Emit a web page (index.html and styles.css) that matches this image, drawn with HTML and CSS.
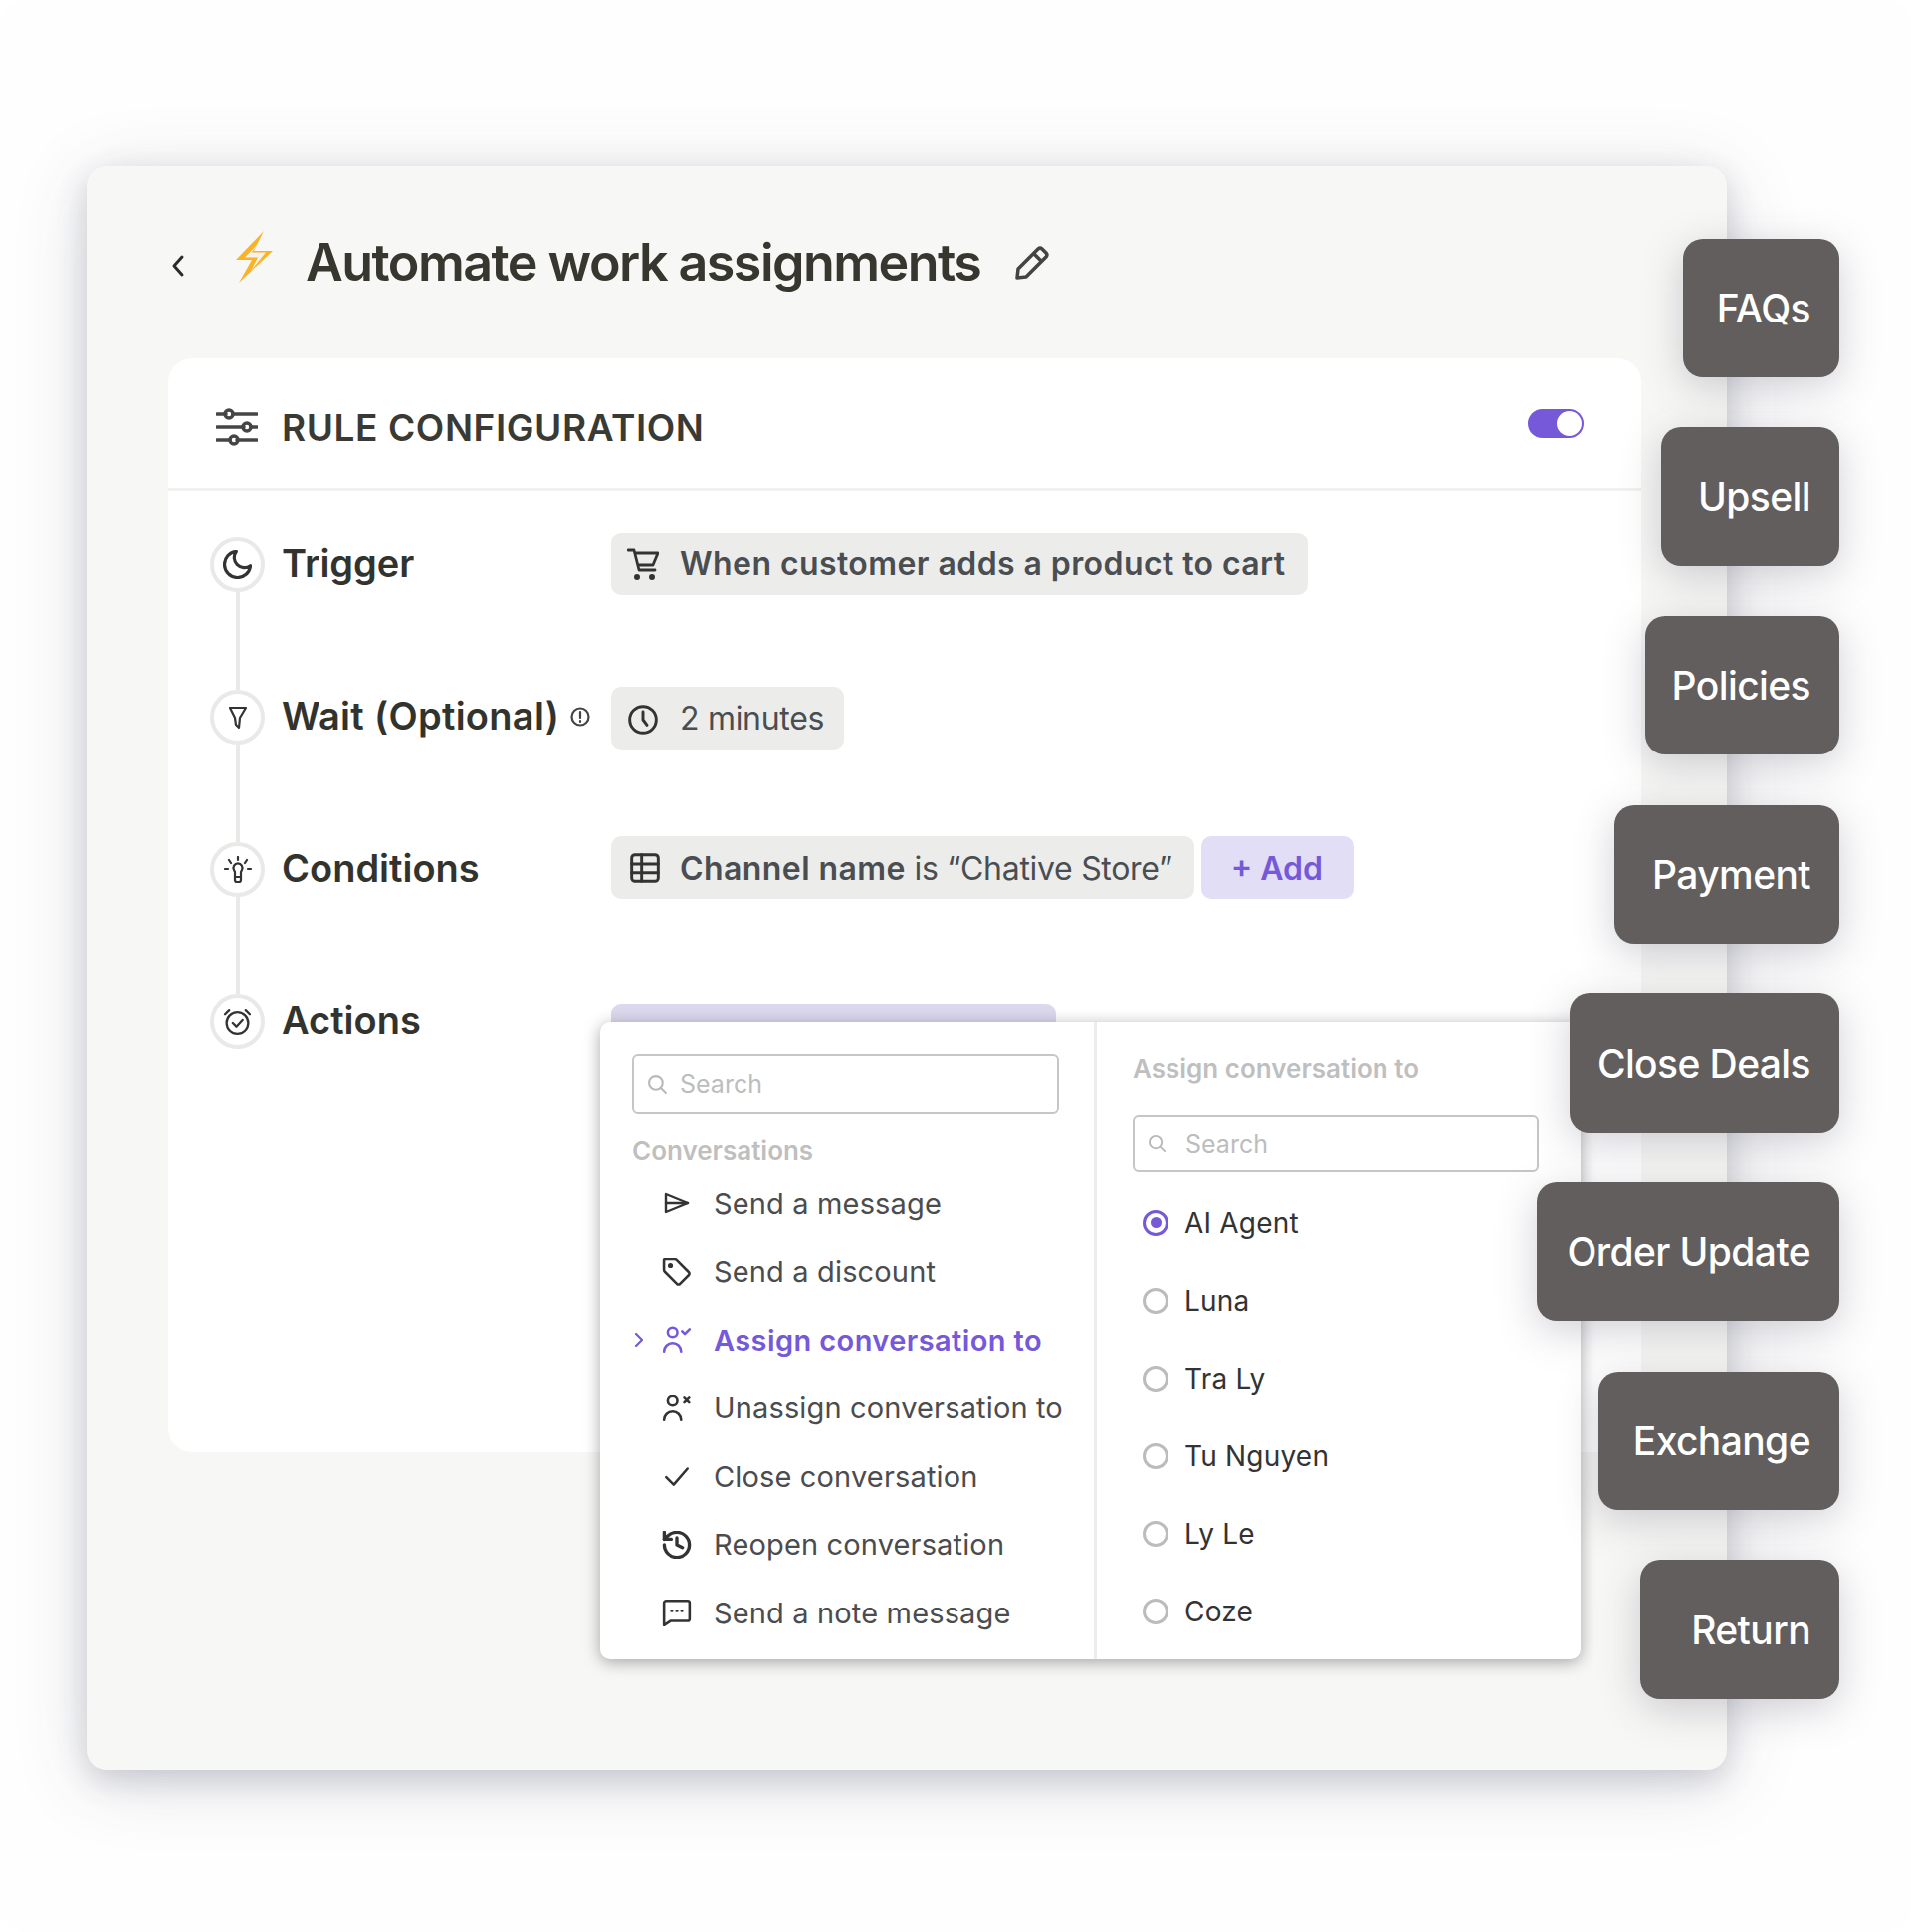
FILE: index.html
```html
<!DOCTYPE html>
<html lang="en">
  <head>
    <meta charset="UTF-8" />
    <meta name="viewport" content="width=device-width, initial-scale=1.0" />
    <title>Automate work assignments</title>
    <link rel="stylesheet" href="styles.css">
  </head>
  <body>
    <div class="frame">
      <div class="panel">
        <div class="page-head">
          <svg class="back-icon" viewBox="0 0 14 24"><path d="M11 3 3 12l8 9" /></svg>
          <svg class="bolt-icon" viewBox="0 0 37 52"><path d="M28 0 0 29h16L3 52l34-32H18z" /><path d="M24 11 9 26.500h13L15 40l15-18.500H15.500z" class="bolt-inner" /></svg>
          <h1>Automate work assignments</h1>
          <svg class="pencil-icon" viewBox="0 0 34 34"><path d="M2 32l1-9L23 3a3 3 0 0 1 4 0l4 4a3 3 0 0 1 0 4L11 31z" /><path d="M19 8l7 7" /></svg>
        </div>

        <div class="card">
          <div class="card-head">
            <svg class="sliders-icon" viewBox="0 0 42 38">
              <path d="M1 6h9M17 6h24M1 19h27M35 19h6M1 32h13M21 32h20" />
              <circle cx="13" cy="6" r="4" /><circle cx="31" cy="19" r="4" /><circle cx="18" cy="32" r="4" />
            </svg>
            <h2>RULE CONFIGURATION</h2>
            <span class="toggle"><span class="toggle-knob"></span></span>
          </div>

          <div class="steps">
            <div class="step">
              <div class="rail">
                <span class="node"><svg class="line-icon node-moon" viewBox="2 2 20 20"><path d="M21 12.8A9 9 0 1 1 11.2 3a7 7 0 0 0 9.8 9.8z" /></svg></span>
                <span class="rail-line"></span>
              </div>
              <div class="step-label">Trigger</div>
              <div class="step-chips chips-trigger">
                <span class="chip strong">
                  <svg class="line-icon chip-icon cart-icon" viewBox="0 0 32 32"><path d="M1 2h6l5 20h16" /><path d="M9 5h22l-5 12H12" /><circle cx="10" cy="29" r="1.600" class="dot" /><circle cx="25" cy="29" r="1.600" class="dot" /></svg>
                  When customer adds a product to cart
                </span>
              </div>
            </div>

            <div class="step">
              <div class="rail">
                <span class="node"><svg class="line-icon node-filter" viewBox="0 0 20 24"><path d="M2 2h16l-6 10-1 10-3-3-1-7z" /></svg></span>
                <span class="rail-line"></span>
              </div>
              <div class="step-label label-wait">Wait (Optional)<svg class="line-icon info-icon" viewBox="0 0 20 20"><circle cx="10" cy="10" r="8.500" /><path d="M10 5v6M10 14v1" /></svg></div>
              <div class="step-chips chips-wait">
                <span class="chip wait-chip">
                  <svg class="line-icon chip-icon clock-icon" viewBox="0 0 24 24"><circle cx="12" cy="12" r="10" /><path d="M12 6v6l3 4" /></svg>
                  2 minutes
                </span>
              </div>
            </div>

            <div class="step">
              <div class="rail">
                <span class="node"><svg class="line-icon node-bulb" viewBox="0 0 28 28"><path d="M10 14a4.500 4.500 0 1 1 8 0l-1 2v8a2 2 0 0 1-2 2h-2a2 2 0 0 1-2-2v-8z" /><path d="M14 1v3M5 4l2 3M23 4l-2 3M1 13h3M24 13h3M11 21h6" /></svg></span>
                <span class="rail-line"></span>
              </div>
              <div class="step-label">Conditions</div>
              <div class="step-chips chips-conditions">
                <span class="chip">
                  <svg class="line-icon chip-icon" viewBox="0 0 24 24"><rect x="2" y="2" width="20" height="20" rx="2.500" /><path d="M2 9h20M2 15.500h20M9.500 2v20" /></svg>
                  <span class="chip-text"><b>Channel name</b> is “Chative Store”</span>
                </span>
                <span class="chip add-chip"><span class="chip-text">+ Add</span></span>
              </div>
            </div>

            <div class="step">
              <div class="rail">
                <span class="node"><svg class="line-icon node-alarm" viewBox="0 0 28 28"><circle cx="14" cy="15.500" r="10.500" /><path d="M9.500 15.500l3.500 3.500 6-6.500M2 7l4-4M26 7l-4-4" /></svg></span>
              </div>
              <div class="step-label">Actions</div>
              <div class="step-chips chips-actions">
                <span class="chip action-chip"></span>
              </div>
            </div>
          </div>
        </div>
      </div>

      <div class="dropdown">
        <div class="menu-col">
          <div class="search search-main">
            <svg class="search-icon" viewBox="0 0 20 20"><circle cx="8.500" cy="8.500" r="6.500" /><path d="M13.500 13.500 18 18" /></svg>
            Search
          </div>
          <div class="col-title menu-title">Conversations</div>
          <div class="menu-item">
            <span class="caret"></span>
            <svg class="line-icon menu-icon" viewBox="-2 -3 30 28"><path d="M2 2l22 9-22 9z" /><path d="M2 11h22" /></svg>
            Send a message
          </div>
          <div class="menu-item">
            <span class="caret"></span>
            <svg class="line-icon menu-icon" viewBox="1 1 26 26"><path d="M2 3a1 1 0 0 1 1-1h9a3 3 0 0 1 2 1l11 11a2 2 0 0 1 0 3l-8 8a2 2 0 0 1-3 0L3 14a3 3 0 0 1-1-2z" /><circle cx="8" cy="8" r="1.200" class="dot" /></svg>
            Send a discount
          </div>
          <div class="menu-item active">
            <span class="caret"><svg class="line-icon" viewBox="0 0 8 14"><path d="M1 1l6 6-6 6" /></svg></span>
            <svg class="line-icon menu-icon" viewBox="0 0 28 26"><circle cx="10" cy="6" r="4.500" /><path d="M2 24a8 8 0 0 1 16 0" /><path d="M19 5l2.500 2.500L26 3" /></svg>
            Assign conversation to
          </div>
          <div class="menu-item">
            <span class="caret"></span>
            <svg class="line-icon menu-icon" viewBox="0 0 28 26"><circle cx="10" cy="6" r="4.500" /><path d="M2 24a8 8 0 0 1 16 0" /><path d="M21 3l4.500 4.500M25.500 3 21 7.500" /></svg>
            Unassign conversation to
          </div>
          <div class="menu-item">
            <span class="caret"></span>
            <svg class="line-icon menu-icon" viewBox="0 0 28 22"><path d="M4 12l7 7L24 4" /></svg>
            Close conversation
          </div>
          <div class="menu-item">
            <span class="caret"></span>
            <svg class="line-icon menu-icon" viewBox="2 2 20 20"><path d="M3 12a9 9 0 1 0 9-9 9.750 9.750 0 0 0-6.740 2.740L3 8" /><path d="M3 3v5h5M12 7v5l4 2" /></svg>
            Reopen conversation
          </div>
          <div class="menu-item">
            <span class="caret"></span>
            <svg class="line-icon menu-icon" viewBox="0 0 28 26"><path d="M2 4a2 2 0 0 1 2-2h20a2 2 0 0 1 2 2v15a2 2 0 0 1-2 2H8l-6 4z" /><path d="M9 11.500h.5M13.800 11.500h.5M18.500 11.500h.5" /></svg>
            Send a note message
          </div>
        </div>

        <div class="assign-col">
          <div class="col-title assign-title">Assign conversation to</div>
          <div class="search search-side">
            <svg class="search-icon" viewBox="0 0 20 20"><circle cx="8.500" cy="8.500" r="6.500" /><path d="M13.500 13.500 18 18" /></svg>
            Search
          </div>
          <div class="radio-list">
            <div class="radio-item"><span class="radio selected"></span>AI Agent</div>
            <div class="radio-item"><span class="radio"></span>Luna</div>
            <div class="radio-item"><span class="radio"></span>Tra Ly</div>
            <div class="radio-item"><span class="radio"></span>Tu Nguyen</div>
            <div class="radio-item"><span class="radio"></span>Ly Le</div>
            <div class="radio-item"><span class="radio"></span>Coze</div>
          </div>
        </div>
      </div>

      <div class="tabs">
        <div class="tab tab-faqs">FAQs</div>
        <div class="tab tab-upsell">Upsell</div>
        <div class="tab tab-policies">Policies</div>
        <div class="tab tab-payment">Payment</div>
        <div class="tab tab-close">Close Deals</div>
        <div class="tab tab-order">Order Update</div>
        <div class="tab tab-exchange">Exchange</div>
        <div class="tab tab-return">Return</div>
      </div>
    </div>
  </body>
</html>
```

FILE: styles.css
```css
* {
  margin: 0;
  padding: 0;
  box-sizing: border-box;
  font-family: "Inter", "Liberation Sans", sans-serif;
}
body {
  background: #ffffff;
}
.frame {
  position: relative;
  width: 1920px;
  height: 1941px;
  padding: 167px 0 0 87px;
  background: #fefefe;
  border-radius: 24px;
  overflow: hidden;
}

/* main panel */
.panel {
  width: 1648px;
  height: 1611px;
  padding-left: 82px;
  background: #f7f7f5;
  border-radius: 20px;
  box-shadow: 0 10px 30px rgba(60, 65, 90, 0.2), 0 12px 75px rgba(60, 65, 90, 0.16);
}
.page-head {
  display: flex;
  align-items: center;
  height: 193px;
}
.back-icon {
  width: 14px;
  height: 24px;
  margin: 6px 0 0 3px;
  fill: none;
  stroke: #2b2b2b;
  stroke-width: 3;
  stroke-linecap: round;
  stroke-linejoin: round;
}
.bolt-icon {
  flex: none;
  width: 37px;
  height: 52px;
  margin: -11px 0 0 51px;
  fill: #fbb324;
}
.bolt-inner {
  fill: #f4f2ea;
}
h1 {
  margin-left: 33px;
  font-size: 52px;
  font-weight: 600;
  letter-spacing: -1.55px;
  line-height: 64px;
  color: #37372f;
}
.pencil-icon {
  width: 34px;
  height: 34px;
  margin-left: 35px;
  fill: none;
  stroke: #444444;
  stroke-width: 3.5;
  stroke-linejoin: round;
}

/* card */
.card {
  width: 1480px;
  height: 1099px;
  background: #ffffff;
  border-radius: 24px;
}
.card-head {
  display: flex;
  align-items: center;
  height: 133px;
  padding: 9px 58px 0 48px;
  border-bottom: 3px solid #f1f1f0;
}
.sliders-icon {
  width: 42px;
  height: 38px;
  margin-top: -2px;
  fill: none;
  stroke: #454545;
  stroke-width: 3.5;
  stroke-linecap: round;
}
h2 {
  flex: 1;
  margin-left: 24px;
  font-size: 37px;
  font-weight: 600;
  letter-spacing: 0.6px;
  color: #3a3a35;
}
.toggle {
  position: relative;
  width: 56px;
  height: 29px;
  margin-top: -9px;
  background: #7559d9;
  border-radius: 15px;
}
.toggle-knob {
  position: absolute;
  top: 2px;
  right: 2px;
  width: 25px;
  height: 25px;
  background: #ffffff;
  border-radius: 50%;
}

/* steps */
.steps {
  padding: 47px 0 0 42px;
}
.step {
  display: grid;
  grid-template-columns: 55px 313px 1fr;
  column-gap: 17px;
  height: 153px;
}
.rail {
  display: flex;
  flex-direction: column;
  align-items: center;
}
.node {
  display: flex;
  flex: none;
  align-items: center;
  justify-content: center;
  width: 55px;
  height: 55px;
  border: 4px solid #e9e9e8;
  border-radius: 50%;
  background: #ffffff;
}
.rail-line {
  flex: 1;
  width: 4px;
  background: #e9e9e8;
}
.step-label {
  display: flex;
  align-items: center;
  height: 54px;
  padding-bottom: 2px;
  font-size: 38px;
  font-weight: 600;
  white-space: nowrap;
  color: #33332e;
}
.label-wait {
  letter-spacing: 0.3px;
}
.line-icon {
  fill: none;
  stroke: currentColor;
  stroke-width: 2.2;
  stroke-linecap: round;
  stroke-linejoin: round;
}
.dot {
  fill: currentColor;
}
.node-moon {
  width: 29px;
  height: 29px;
  color: #333333;
}
.node-filter {
  width: 20px;
  height: 24px;
  color: #333333;
}
.node-bulb {
  width: 28px;
  height: 28px;
  color: #333333;
}
.node-alarm {
  width: 29px;
  height: 29px;
  color: #333333;
}
.info-icon {
  flex: none;
  width: 20px;
  height: 20px;
  margin: 2px 0 0 11px;
  color: #444444;
}
.step-chips {
  display: flex;
  gap: 7px;
  margin-left: 1px;
}
.chips-trigger {
  margin-top: -5px;
}
.chips-wait {
  margin-top: -3px;
}
.chips-conditions {
  margin-top: -6px;
}
.chips-actions {
  margin-top: 10px;
}
.chip {
  display: flex;
  align-items: center;
  height: 63px;
  padding: 0 22px 0 18px;
  background: #ecedea;
  border-radius: 10px;
  font-size: 32px;
  letter-spacing: -0.3px;
  line-height: 63px;
  white-space: nowrap;
  color: #4a4d52;
}
.chip.strong,
.chip b {
  font-weight: 600;
  letter-spacing: 0.42px;
}
.chip-text {
  padding-top: 2px;
}
.chip-icon {
  flex: none;
  width: 32px;
  height: 32px;
  margin-right: 19px;
  color: #333333;
}
.cart-icon {
  margin: 0 21px 0 -2px;
  stroke-width: 2.8;
}
.clock-icon {
  margin: 2px 21px 0 -2px;
}
.wait-chip {
  padding-right: 20px;
}
.add-chip {
  padding: 0 31px 0 30px;
  background: #e2def6;
  font-weight: 600;
  letter-spacing: 0;
  color: #7559d9;
}
.action-chip {
  width: 447px;
  padding: 0;
  background: #dcd8ee;
}

/* dropdown */
.dropdown {
  position: absolute;
  top: 1027px;
  left: 603px;
  display: flex;
  width: 985px;
  height: 640px;
  background: #ffffff;
  border-radius: 10px;
  box-shadow: 0 3px 16px rgba(30, 30, 40, 0.38);
}
.menu-col {
  flex: none;
  width: 499px;
  padding: 32px 0 0 32px;
  border-right: 3px solid #ededec;
}
.assign-col {
  flex: 1;
  padding: 27px 0 0 36px;
}
.search {
  display: flex;
  align-items: center;
  border: 2px solid #c6c6c6;
  border-radius: 6px;
  font-size: 25px;
  color: #bdbdbd;
}
.search-main {
  width: 429px;
  height: 60px;
  padding-left: 13px;
}
.search-side {
  width: 408px;
  height: 57px;
  margin-top: 26px;
  padding-left: 13px;
}
.search-icon {
  flex: none;
  width: 21px;
  height: 21px;
  margin-right: 12px;
  fill: none;
  stroke: #b9b9b9;
  stroke-width: 2;
  stroke-linecap: round;
}
.search-side .search-icon {
  width: 19px;
  height: 19px;
  margin-right: 19px;
}
.col-title {
  height: 40px;
  font-size: 26px;
  font-weight: 600;
  line-height: 40px;
  color: #bfbfbf;
}
.menu-title {
  height: 39px;
  margin-top: 17px;
}
.menu-item {
  display: flex;
  align-items: center;
  height: 68.5px;
  font-size: 29px;
  letter-spacing: 0.15px;
  white-space: nowrap;
  color: #4b4c4e;
}
.menu-item.active {
  font-weight: 600;
  letter-spacing: 0.4px;
  color: #7559d9;
}
.caret {
  display: flex;
  flex: none;
  width: 28px;
  padding-left: 3px;
}
.caret svg {
  width: 8px;
  height: 14px;
}
.menu-icon {
  flex: none;
  width: 30px;
  height: 28px;
  margin: 0 22px 0 2px;
  stroke-width: 2.4;
  color: #333333;
}
.active .menu-icon {
  color: #7559d9;
}
.radio-list {
  margin-top: 12.5px;
}
.radio-item {
  display: flex;
  align-items: center;
  height: 78px;
  padding-left: 10px;
  font-size: 28px;
  letter-spacing: 0.2px;
  color: #333333;
}
.radio {
  flex: none;
  display: flex;
  align-items: center;
  justify-content: center;
  width: 26px;
  height: 26px;
  margin-right: 16px;
  border: 3.5px solid #bcbcbc;
  border-radius: 50%;
}
.radio.selected {
  border-color: #7559d9;
}
.radio.selected::after {
  content: "";
  width: 11px;
  height: 11px;
  background: #7559d9;
  border-radius: 50%;
}

/* tabs on the right */
.tabs {
  position: absolute;
  top: 239.5px;
  right: 72px;
  display: flex;
  flex-direction: column;
  align-items: flex-end;
  gap: 50.2px;
}
.tab {
  display: flex;
  align-items: center;
  justify-content: flex-end;
  height: 139.5px;
  padding-right: 29px;
  background: #615e5d;
  border-radius: 20px;
  box-shadow: 0 10px 40px rgba(70, 72, 95, 0.25);
  font-size: 39px;
  font-weight: 500;
  letter-spacing: -0.6px;
  white-space: nowrap;
  color: #ffffff;
}
.tab-faqs {
  width: 157px;
}
.tab-upsell {
  width: 179px;
}
.tab-policies {
  width: 195px;
}
.tab-payment {
  width: 226px;
}
.tab-close {
  width: 271px;
}
.tab-order {
  width: 304px;
}
.tab-exchange {
  width: 242px;
}
.tab-return {
  width: 200px;
}
```
